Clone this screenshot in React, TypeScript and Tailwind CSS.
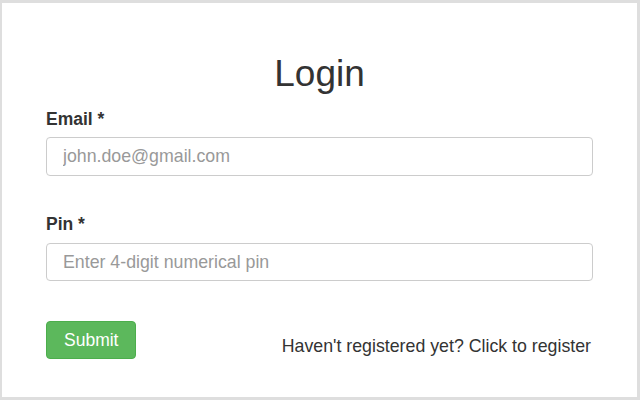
export default function App() {
  return (
    <div className="w-[640px] h-[400px] bg-white border-t-[3px] border-l-[2px] border-r-[3px] border-b-[3px] border-[#dedede] font-['Liberation_Sans',Arial,sans-serif] text-[#333333]">
      <div className="px-[44px] pt-[51px]">
        <h1 className="text-center text-[37px] leading-[40px] font-normal">Login</h1>

        <form className="mt-[13px]" onSubmit={(e) => e.preventDefault()}>
          <div>
            <label className="block text-[17.5px] leading-[25px] font-bold">Email *</label>
            <input
              type="email"
              placeholder="john.doe@gmail.com"
              className="mt-[5px] block w-full h-[39px] px-[16px] text-[17.75px] border border-[#cccccc] rounded-[4px] placeholder:text-[#999999] outline-none"
            />
          </div>

          <div className="mt-[36px]">
            <label className="block text-[17.5px] leading-[25px] font-bold">Pin *</label>
            <input
              type="password"
              placeholder="Enter 4-digit numerical pin"
              className="mt-[6px] block w-full h-[38px] px-[16px] text-[17.75px] border border-[#cccccc] rounded-[4px] placeholder:text-[#999999] outline-none"
            />
          </div>

          <div className="mt-[40px] flex items-start justify-between">
            <button
              type="submit"
              className="h-[38px] px-[17px] bg-[#5cb85c] border border-[#4cae4c] text-white text-[17.5px] rounded-[4px]"
            >
              Submit
            </button>
            <span className="mt-[13px] mr-[2px] text-[17.75px] leading-[25px]">Haven't registered yet? Click to register</span>
          </div>
        </form>
      </div>
    </div>
  );
}
